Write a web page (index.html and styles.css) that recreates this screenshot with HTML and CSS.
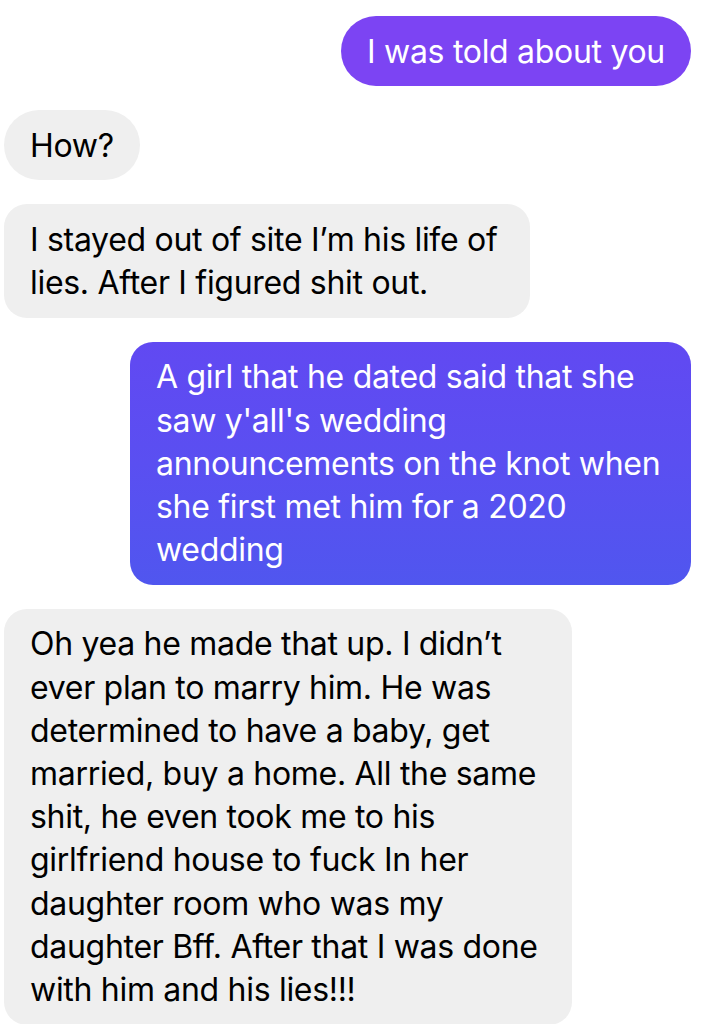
FILE: index.html
```html
<!DOCTYPE html>
<html lang="en">
<head>
<meta charset="utf-8">
<title>Chat</title>
<link rel="stylesheet" href="styles.css">
</head>
<body>
<main class="thread">
  <div class="row row-out">
    <div class="bubble out pill out-1">I was told about you</div>
  </div>
  <div class="row row-in">
    <div class="bubble in pill">How?</div>
  </div>
  <div class="row row-in">
    <div class="bubble in in-short">I stayed out of site I’m his life of lies. After I figured shit out.</div>
  </div>
  <div class="row row-out">
    <div class="bubble out out-2">A girl that he dated said that she saw y'all's wedding announcements on the knot when she first met him for a 2020 wedding</div>
  </div>
  <div class="row row-in">
    <div class="bubble in">Oh yea he made that up. I didn’t ever plan to marry him. He was determined to have a baby, get married, buy a home. All the same shit, he even took me to his girlfriend house to fuck In her daughter room who was my daughter Bff. After that I was done with him and his lies!!!</div>
  </div>
</main>
</body>
</html>
```

FILE: styles.css
```css
* { box-sizing: border-box; }

html, body {
  margin: 0;
  padding: 0;
  background: #ffffff;
}

body {
  font-family: "Inter", "Roboto", "Liberation Sans", sans-serif;
  -webkit-font-smoothing: antialiased;
}

.thread {
  display: flex;
  flex-direction: column;
  gap: 24px;
  padding: 16px 16px 0 4px;
}

.row {
  display: flex;
}

.row-out { justify-content: flex-end; }
.row-in { justify-content: flex-start; }

.bubble {
  max-width: 568px;
  padding: 13.5px 26px;
  border-radius: 23px;
  font-size: 32px;
  line-height: 43.2px;
  letter-spacing: -0.3px;
}

.pill { border-radius: 35px; }

.in {
  background: #efefef;
  color: #000000;
}

.in-short { max-width: 526px; }

.out {
  color: #ffffff;
}

.out-1 { background: #7c44f3; }

.out-2 {
  max-width: 561px;
  background: linear-gradient(180deg, #6149f2 0%, #5a4ff1 50%, #5056ef 100%);
}
```
